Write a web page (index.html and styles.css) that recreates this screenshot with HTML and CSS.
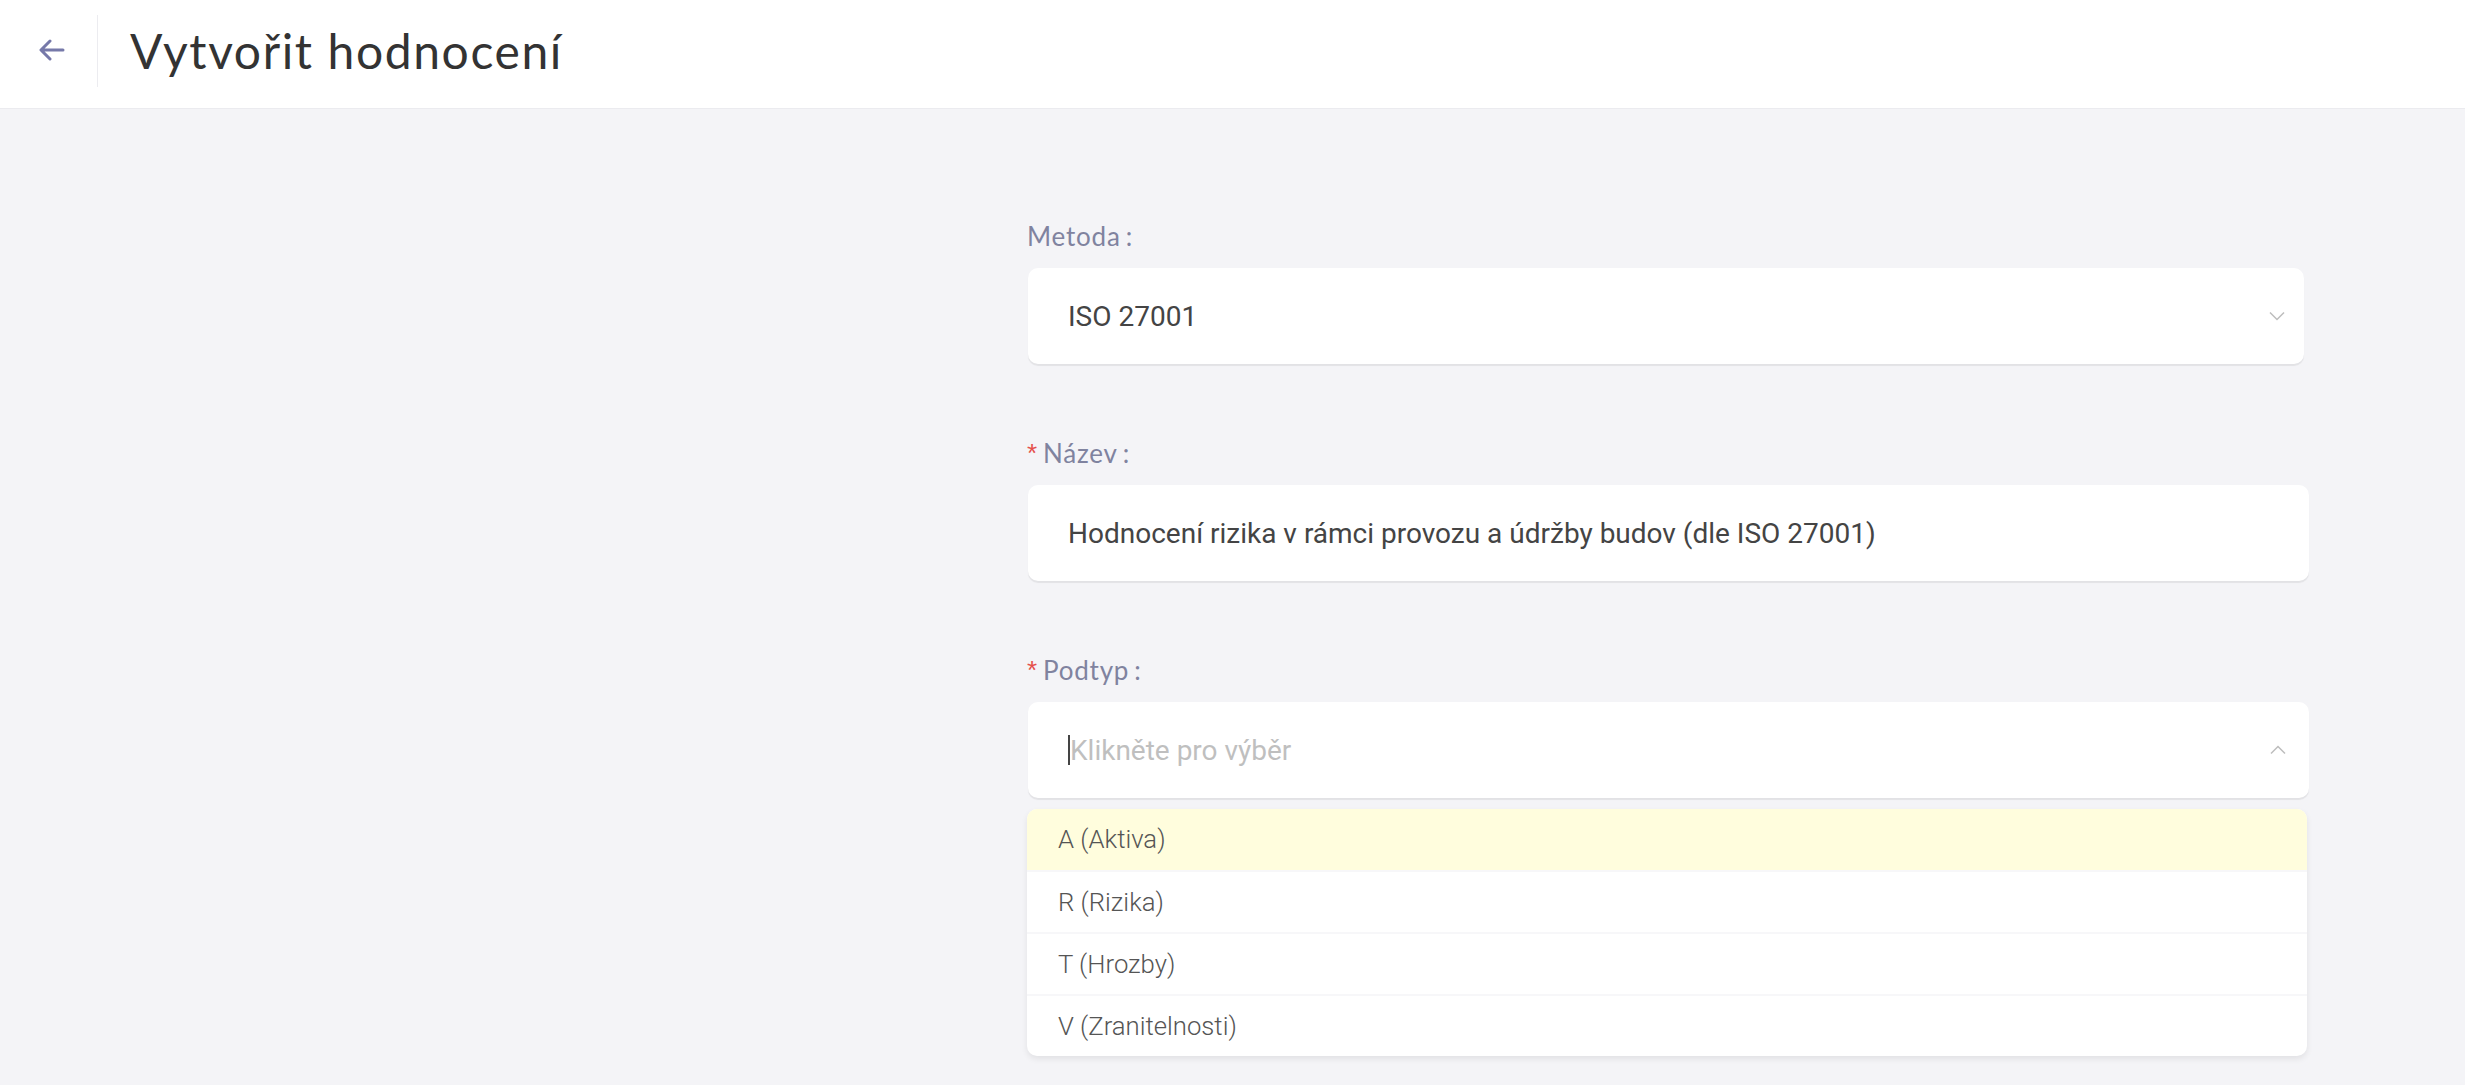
FILE: index.html
```html
<!DOCTYPE html>
<html lang="cs">
<head>
<meta charset="utf-8">
<title>Vytvořit hodnocení</title>
<link rel="stylesheet" href="styles.css">
</head>
<body>
<header class="topbar">
  <button class="back" aria-label="Zpět">
    <svg width="26" height="22" viewBox="0 0 26 22"><path d="M24 11H3M11 2L2 11l9 9" fill="none" stroke="#7679a9" stroke-width="3" stroke-linecap="round" stroke-linejoin="round"/></svg>
  </button>
  <div class="divider"></div>
  <h1 class="title">Vytvořit hodnocení</h1>
</header>
<main class="page">
  <div class="spacer"></div>
  <form class="form">
    <div class="field">
      <label class="label">Metoda<span class="colon">:</span></label>
      <div class="control control--select">
        <span class="value">ISO 27001</span>
        <svg class="chev" width="16" height="10" viewBox="0 0 16 10"><path d="M1 1.5l7 7 7-7" fill="none" stroke="#bdbdbd" stroke-width="1.5"/></svg>
      </div>
    </div>
    <div class="field">
      <label class="label"><span class="req">*</span>Název<span class="colon">:</span></label>
      <div class="control control--wide">
        <span class="value">Hodnocení rizika v rámci provozu a údržby budov (dle ISO 27001)</span>
      </div>
    </div>
    <div class="field field--last">
      <label class="label"><span class="req">*</span>Podtyp<span class="colon">:</span></label>
      <div class="control control--wide">
        <span class="caret"></span><span class="placeholder">Klikněte pro výběr</span>
        <svg class="chev" width="16" height="10" viewBox="0 0 16 10"><path d="M1 8.5l7-7 7 7" fill="none" stroke="#bdbdbd" stroke-width="1.5"/></svg>
      </div>
      <ul class="menu">
        <li class="option option--active">A (Aktiva)</li>
        <li class="option">R (Rizika)</li>
        <li class="option">T (Hrozby)</li>
        <li class="option">V (Zranitelnosti)</li>
      </ul>
    </div>
  </form>
</main>
</body>
</html>
```
FILE: styles.css
```css
* { box-sizing: border-box; }
html, body { margin: 0; padding: 0; }
body {
  background: #f4f4f7;
  font-family: "Roboto", "Liberation Sans", sans-serif;
  height: 1085px;
  overflow: hidden;
}
.topbar {
  height: 109px;
  background: #fff;
  border-bottom: 1px solid #ebebef;
  display: flex;
  align-items: center;
}
.back {
  border: 0;
  background: none;
  padding: 0;
  margin-left: 39px;
  width: 26px;
  height: 22px;
  display: flex;
  margin-top: -8px;
}
.divider {
  width: 1px;
  height: 72px;
  background: #ececf0;
  margin-left: 32px;
  margin-top: -6px;
}
.title {
  margin: -8px 0 0 32px;
  font-family: "Lato", "Noto Sans", sans-serif;
  font-weight: 400;
  font-size: 48px;
  letter-spacing: 1.6px;
  color: #333;
}
.page {
  display: grid;
  grid-template-columns: 1027px 1280px 1fr;
  padding-top: 107px;
}
.form { margin: 0; }
.field { margin-bottom: 69px; }
.field--last { margin-bottom: 0; }
.label {
  display: block;
  height: 40px;
  line-height: 40px;
  margin-bottom: 12px;
  font-family: "Lato", "Noto Sans", sans-serif;
  font-size: 26px;
  letter-spacing: 0.8px;
  color: #80839f;
}
.colon { margin-left: 5px; }
.req {
  display: inline-block;
  color: #e5504b;
  font-family: "Liberation Sans", sans-serif;
  font-size: 26px;
  line-height: 26px;
  vertical-align: 1px;
  margin-right: 5px;
}
.control {
  height: 96px;
  background: #fff;
  border-radius: 10px;
  box-shadow: 0 2px 1px rgba(0, 0, 0, 0.07);
  display: flex;
  align-items: center;
  padding: 0 19px 0 40px;
  margin-left: 1px;
  font-size: 28px;
  color: #444;
  position: relative;
}
.control--select { width: 1276px; }
.control--wide { width: 1281px; padding-right: 23px; }
.value { flex: 1; }
.placeholder { flex: 1; color: #bfbfbf; }
.caret {
  width: 2px;
  height: 30px;
  background: #444;
}
.chev { flex: none; }
.menu {
  list-style: none;
  margin: 11px 0 0 0;
  padding: 0;
  width: 1280px;
  background: #fff;
  border-radius: 10px;
  box-shadow: 0 3px 6px rgba(0, 0, 0, 0.08);
  overflow: hidden;
}
.option {
  height: 62px;
  line-height: 61px;
  padding-left: 31px;
  font-size: 25.7px;
  font-weight: 300;
  color: #555;
  border-top: 2px solid #f7f7f9;
}
.option:first-child { border-top: 0; height: 61px; }
.option--active { background: #fffddd; }
```
